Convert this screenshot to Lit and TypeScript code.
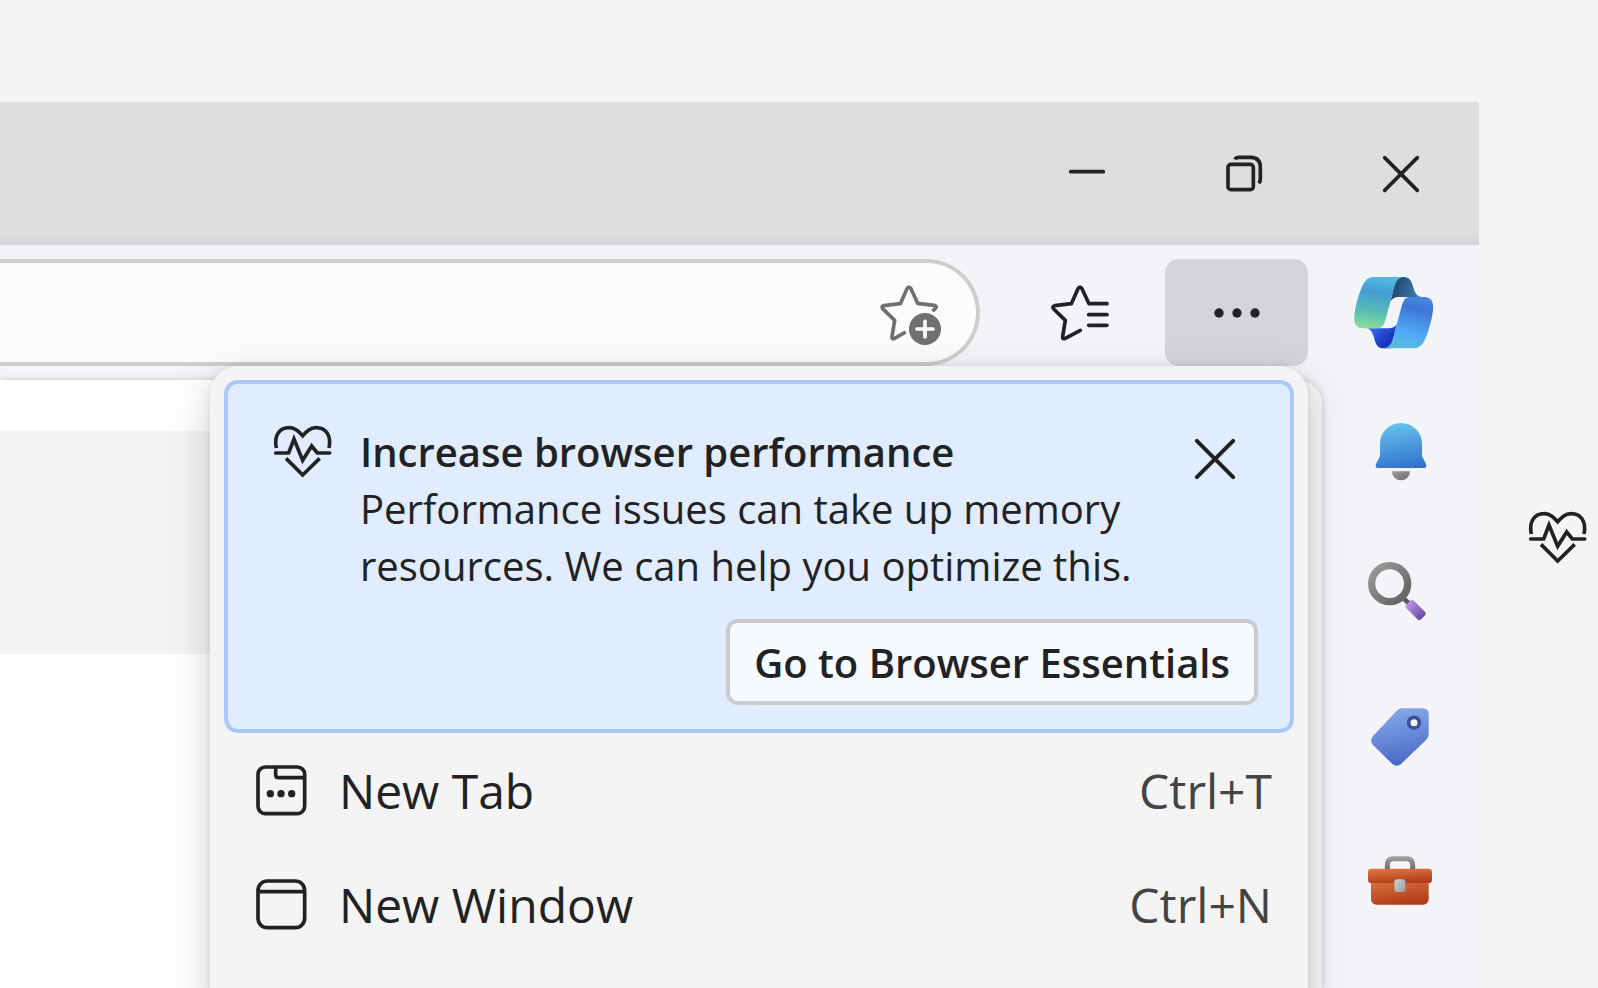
import { LitElement, html, css, svg } from "lit";
import { customElement } from "lit/decorators.js";

const heart = html`<svg class="heart" width="58" height="50" viewBox="822 589 174 150" aria-hidden="true">
  <path d="M829 655C821 616 839 594 868 594C886 594 897 606 908 618C919 606 930 594 948 594C977 594 995 616 987 655" />
  <path d="M827 670H866L882 628L908 692L935 649L952 670H989" stroke-linecap="round" />
  <path d="M858 686L908 736L959 686" />
</svg>`;

const cross = (size: number) => html`<svg width=${size} height=${size} viewBox="0 0 108 108" aria-hidden="true">
  <path d="M5 5L103 103M103 5L5 103" stroke-linecap="round" />
</svg>`;

const icons = {
  minimize: html`<svg width="36" height="36" viewBox="87 198 108 108" aria-hidden="true">
    <path d="M92 245H190" stroke-linecap="round" />
  </svg>`,
  restore: html`<svg width="36" height="36" viewBox="557 198 108 108" aria-hidden="true">
    <rect x="563" y="223" width="76" height="76" rx="9" />
    <path d="M583 208Q587 202 595 202H632Q660 203 660 232V266Q660 273 656 280" />
  </svg>`,
  starAdd: html`<svg width="64" height="66" viewBox="57 119 192 198" aria-hidden="true">
    <path stroke-linejoin="round" d="M137 275L104 294Q95 298 96 288L104 240L68 205Q63 197 72 196L121 190L141 145Q147 135 153 145L173 189L222 195Q234 198 225 206L217 212" />
    <circle class="solid" cx="195" cy="266" r="48" />
    <path class="plus" d="M195 243V290M171 266H219" />
  </svg>`,
  favorites: html`<svg width="64" height="66" viewBox="564 119 192 198" aria-hidden="true">
    <path stroke-linecap="round" stroke-linejoin="round" d="M661 270L616 294Q607 298 608 288L616 240L581 206Q575 198 584 196L634 190L654 145Q660 135 666 145L687 190H741M686 223H741M686 255H741" />
  </svg>`,
  more: html`<svg width="46" height="10" viewBox="0 0 138 30" aria-hidden="true">
    <g class="solid"><circle cx="15" cy="15" r="14" /><circle cx="69" cy="15" r="14" /><circle cx="123" cy="15" r="14" /></g>
  </svg>`,
  copilot: html`<svg class="art" width="80" height="72" viewBox="612 111 240 216" aria-hidden="true">
    <defs>
      <linearGradient id="cp1" x1="0.55" y1="0" x2="0.4" y2="1"><stop offset="0" stop-color="#50bde4" /><stop offset=".3" stop-color="#459cd4" /><stop offset=".65" stop-color="#55b9b7" /><stop offset="1" stop-color="#85dc98" /></linearGradient>
      <linearGradient id="cp2" x1="0.1" y1="0.5" x2="1" y2="0.7"><stop offset="0" stop-color="#234a70" /><stop offset=".5" stop-color="#2e6694" /><stop offset="1" stop-color="#3a80c4" /></linearGradient>
      <linearGradient id="cp3" x1="0.6" y1="0" x2="0.35" y2="1"><stop offset="0" stop-color="#4585de" /><stop offset=".2" stop-color="#3f76d8" /><stop offset=".7" stop-color="#50acf7" /><stop offset="1" stop-color="#58bcd9" /></linearGradient>
      <linearGradient id="cp4" x1="0" y1="0" x2="0.8" y2="0.6"><stop offset="0" stop-color="#3c82e6" /><stop offset=".5" stop-color="#2c58dc" /><stop offset="1" stop-color="#1a34c0" /></linearGradient>
    </defs>
    <path d="M738 111H762C778 111 784 122 788 136C793 155 799 170 814 171H745C735 171 727 175 722 184Z" fill="url(#cp2)" />
    <path d="M724 325H700C684 325 678 314 674 300C669 281 663 266 648 265H717C727 265 735 261 740 252Z" fill="url(#cp4)" />
    <path d="M670 111H762C745 112 738 124 733 141L709 230C702 256 697 265 682 265H640C618 265 610 250 613 225C617 195 624 170 634 145C643 122 655 111 670 111Z" fill="url(#cp1)" />
    <path d="M792 325H700C717 324 724 312 729 295L753 206C760 180 765 171 780 171H822C844 171 852 186 849 211C845 241 838 266 828 291C819 314 807 325 792 325Z" fill="url(#cp3)" />
  </svg>`,
  newTab: html`<svg width="52" height="52" viewBox="196 372 156 156" aria-hidden="true">
    <rect x="205" y="381" width="140" height="140" rx="22" />
    <path d="M258 381V404Q258 413 267 413H345" />
    <g class="solid"><circle cx="242" cy="461" r="11" /><circle cx="274" cy="461" r="11" /><circle cx="306" cy="461" r="11" /></g>
  </svg>`,
  newWindow: html`<svg width="52" height="52" viewBox="196 714 156 156" aria-hidden="true">
    <rect x="205" y="723" width="140" height="140" rx="28" />
    <path d="M205 755H345" />
  </svg>`,
};

const sidebarItems = [
  {
    label: "Notifications",
    viewBox: "267 168 192 192",
    art: svg`<defs>
      <linearGradient id="bell" x1=".4" y1="0" x2=".6" y2="1"><stop offset="0" stop-color="#66c3ec"/><stop offset="1" stop-color="#3273cf"/></linearGradient>
      <linearGradient id="clap" x1="0" y1="0" x2="1" y2="1"><stop offset="0" stop-color="#9a9a9a"/><stop offset="1" stop-color="#6b6b6b"/></linearGradient></defs>
      <path fill="url(#bell)" d="M300 250A63 61 0 0 1 426 250V288L438 312Q442 324 431 324H295Q284 324 288 312L300 288Z"/>
      <path fill="url(#clap)" d="M336 334H390A27 27 0 0 1 336 334Z"/>`,
  },
  {
    label: "Search",
    viewBox: "267 600 192 192",
    art: svg`<defs>
      <linearGradient id="ring" x1="0" y1="0" x2="1" y2="1"><stop offset="0" stop-color="#9c9c9c"/><stop offset="1" stop-color="#606060"/></linearGradient>
      <linearGradient id="grip" x1="0" y1="0" x2="1" y2="0"><stop offset="0" stop-color="#b994e8"/><stop offset="1" stop-color="#6b4ba3"/></linearGradient></defs>
      <path d="M368 712L390 734" stroke="#585858" stroke-width="14"/>
      <circle cx="329" cy="671" r="54" stroke="url(#ring)" stroke-width="22" fill="none"/>
      <rect x="376" y="734" width="62" height="32" rx="8" transform="rotate(45 407 750)" fill="url(#grip)"/>`,
  },
  {
    label: "Shopping",
    viewBox: "267 72 192 192",
    art: svg`<defs>
      <linearGradient id="tag" x1=".4" y1="0" x2=".6" y2="1"><stop offset="0" stop-color="#86a9ea"/><stop offset="1" stop-color="#4767c4"/></linearGradient></defs>
      <path fill="url(#tag)" d="M366 85H428Q446 85 446 103V162Q446 172 439 179L363 252Q350 263 337 252L280 196Q267 181 280 167L350 92Q357 85 366 85Z"/>
      <circle cx="402" cy="128" r="16" fill="#f5f6fa" stroke="#3b4f9c" stroke-width="11"/>`,
  },
  {
    label: "Tools",
    viewBox: "267 504 192 192",
    art: svg`<defs>
      <linearGradient id="body" x1="0.3" y1="0" x2=".6" y2="1"><stop offset="0" stop-color="#dc7640"/><stop offset="1" stop-color="#b03a18"/></linearGradient>
      <linearGradient id="hand" x1="0" y1="0" x2="0" y2="1"><stop offset="0" stop-color="#9b9b9b"/><stop offset="1" stop-color="#686868"/></linearGradient>
      <linearGradient id="latch" x1="0" y1="0" x2="1" y2="1"><stop offset="0" stop-color="#d0d2d3"/><stop offset="1" stop-color="#979ca0"/></linearGradient></defs>
      <path fill="none" stroke="url(#hand)" stroke-width="15" d="M322 570V554Q322 536 340 536H380Q398 536 398 554V570"/>
      <rect x="273" y="590" width="173" height="84" rx="16" fill="url(#body)"/>
      <rect x="264" y="566" width="192" height="43" rx="10" fill="url(#body)"/>
      <rect x="343" y="598" width="33" height="38" rx="9" fill="url(#latch)"/>`,
  },
];

const menuItems = [
  { label: "New Tab", keys: "Ctrl+T", icon: icons.newTab },
  { label: "New Window", keys: "Ctrl+N", icon: icons.newWindow },
];

@customElement("app-root")
export class AppRoot extends LitElement {
  static styles = css`
    :host {
      display: flex;
      height: 100vh;
      overflow: hidden;
      background: #f4f4f4;
      color: #202224;
      font-family: "Open Sans", "Noto Sans", sans-serif;
    }
    * {
      box-sizing: border-box;
    }
    button {
      display: flex;
      align-items: center;
      justify-content: center;
      padding: 0;
      border: 0;
      background: none;
      color: inherit;
      font: inherit;
    }
    svg {
      display: block;
      flex: none;
      overflow: visible;
      fill: none;
      stroke: currentColor;
      stroke-width: 11px;
    }
    svg.art {
      stroke: none;
      stroke-width: initial;
    }
    .solid {
      fill: currentColor;
      stroke: none;
    }
    .plus {
      stroke: #fff;
      stroke-linecap: round;
    }
    .window {
      position: relative;
      flex: 1;
      display: flex;
      flex-direction: column;
      margin-top: 102px;
      background: #f3f4f8;
    }
    .titlebar {
      display: flex;
      justify-content: flex-end;
      height: 143px;
      background: linear-gradient(#dddee0 92%, #d3d4d6);
    }
    .titlebar button {
      width: 157px;
    }
    .toolbar {
      display: flex;
      gap: 14px;
      padding: 14px 14px 14px 0;
    }
    .address {
      flex: 1;
      display: flex;
      height: 107px;
      margin-right: 14px;
      padding-right: 33px;
      border: 4px solid #cdcfce;
      border-left: 0;
      border-radius: 0 54px 54px 0;
      background: #fbfcfe;
    }
    .address input {
      flex: 1;
      min-width: 0;
      border: 0;
      outline: 0;
      background: none;
      font: inherit;
      font-size: 40px;
    }
    .address button {
      color: #6f7170;
    }
    .tool {
      width: 143px;
      height: 107px;
      border-radius: 14px;
    }
    .tool.active {
      background: #d4d5d9;
    }
    .body {
      flex: 1;
      display: flex;
    }
    .content {
      flex: 1;
      padding: 51px 28px 0 0;
      border-radius: 0 24px 0 0;
      background: linear-gradient(to right, #fff 80%, #f6f6f6 80%);
      box-shadow: 0 0 6px rgba(0, 0, 0, 0.2);
    }
    .hero {
      height: 223px;
      background: #f4f4f4;
    }
    .sidebar {
      display: flex;
      flex-direction: column;
      align-items: center;
      gap: 80px;
      width: 157px;
      padding-top: 36px;
    }
    .menu {
      position: absolute;
      top: 264px;
      right: 171px;
      bottom: -40px;
      left: 210px;
      padding-top: 14px;
      border-radius: 28px;
      background: #f4f4f4;
      box-shadow: 0 0 6px rgba(0, 0, 0, 0.1), 0 14px 44px rgba(0, 0, 0, 0.18);
    }
    .banner {
      display: flex;
      flex-wrap: wrap;
      justify-content: flex-end;
      margin: 0 14px;
      padding: 39px 32px 24px 46px;
      border: 4px solid #acc8f8;
      border-radius: 14px;
      background: #e1edfe;
      font-size: 40px;
      line-height: 57px;
    }
    .heart {
      margin: 3px 28px 0 0;
    }
    .message {
      flex: 1;
    }
    .message h2,
    .message p {
      margin: 0;
      font-size: inherit;
    }
    .message h2,
    .action {
      font-weight: 600;
    }
    .dismiss {
      width: 86px;
      height: 72px;
    }
    .actions {
      display: flex;
      justify-content: flex-end;
      width: 100%;
      margin-top: 25px;
    }
    .actions .action {
      height: 86px;
      padding: 0 24px;
      border: 4px solid #c9cbce;
      border-radius: 12px;
      background: #f7faff;
    }
    .menu .item {
      width: 100%;
      height: 114px;
      padding: 0 36px 0 45px;
      gap: 32px;
      font-size: 48px;
      text-align: left;
    }
    .item .label {
      flex: 1;
    }
    .item .keys {
      color: #444;
    }
    .rail {
      display: flex;
      justify-content: flex-end;
      align-items: flex-start;
      width: 119px;
      padding: 512px 11px 0 0;
    }
    .rail .heart {
      margin: 0;
    }
  `;

  render() {
    return html`
      <div class="window">
        <header class="titlebar">
          <button aria-label="Minimize">${icons.minimize}</button>
          <button aria-label="Restore">${icons.restore}</button>
          <button aria-label="Close">${cross(36)}</button>
        </header>
        <nav class="toolbar" aria-label="Toolbar">
          <div class="address">
            <input type="text" aria-label="Address" />
            <button aria-label="Add to favorites">${icons.starAdd}</button>
          </div>
          <button class="tool" aria-label="Favorites">${icons.favorites}</button>
          <button class="tool active" aria-label="Settings and more" aria-expanded="true">${icons.more}</button>
          <button class="tool" aria-label="Copilot">${icons.copilot}</button>
        </nav>
        <div class="body">
          <main class="content"><div class="hero"></div></main>
          <aside class="sidebar" aria-label="Sidebar">
            ${sidebarItems.map(
              (item) => html`<button aria-label=${item.label}>
                <svg class="art" width="64" height="64" viewBox=${item.viewBox} aria-hidden="true">${item.art}</svg>
              </button>`
            )}
          </aside>
        </div>
        <div class="menu">
          <section class="banner">
            ${heart}
            <div class="message">
              <h2>Increase browser performance</h2>
              <p>Performance issues can take up memory<br />resources. We can help you optimize this.</p>
            </div>
            <button class="dismiss" aria-label="Dismiss">${cross(40)}</button>
            <div class="actions"><button class="action">Go to Browser Essentials</button></div>
          </section>
          <div role="menu" aria-label="Settings and more">
            ${menuItems.map(
              (item) => html`<button class="item" role="menuitem">
                ${item.icon}<span class="label">${item.label}</span><span class="keys">${item.keys}</span>
              </button>`
            )}
          </div>
        </div>
      </div>
      <div class="rail"><button aria-label="Browser essentials">${heart}</button></div>
    `;
  }
}
